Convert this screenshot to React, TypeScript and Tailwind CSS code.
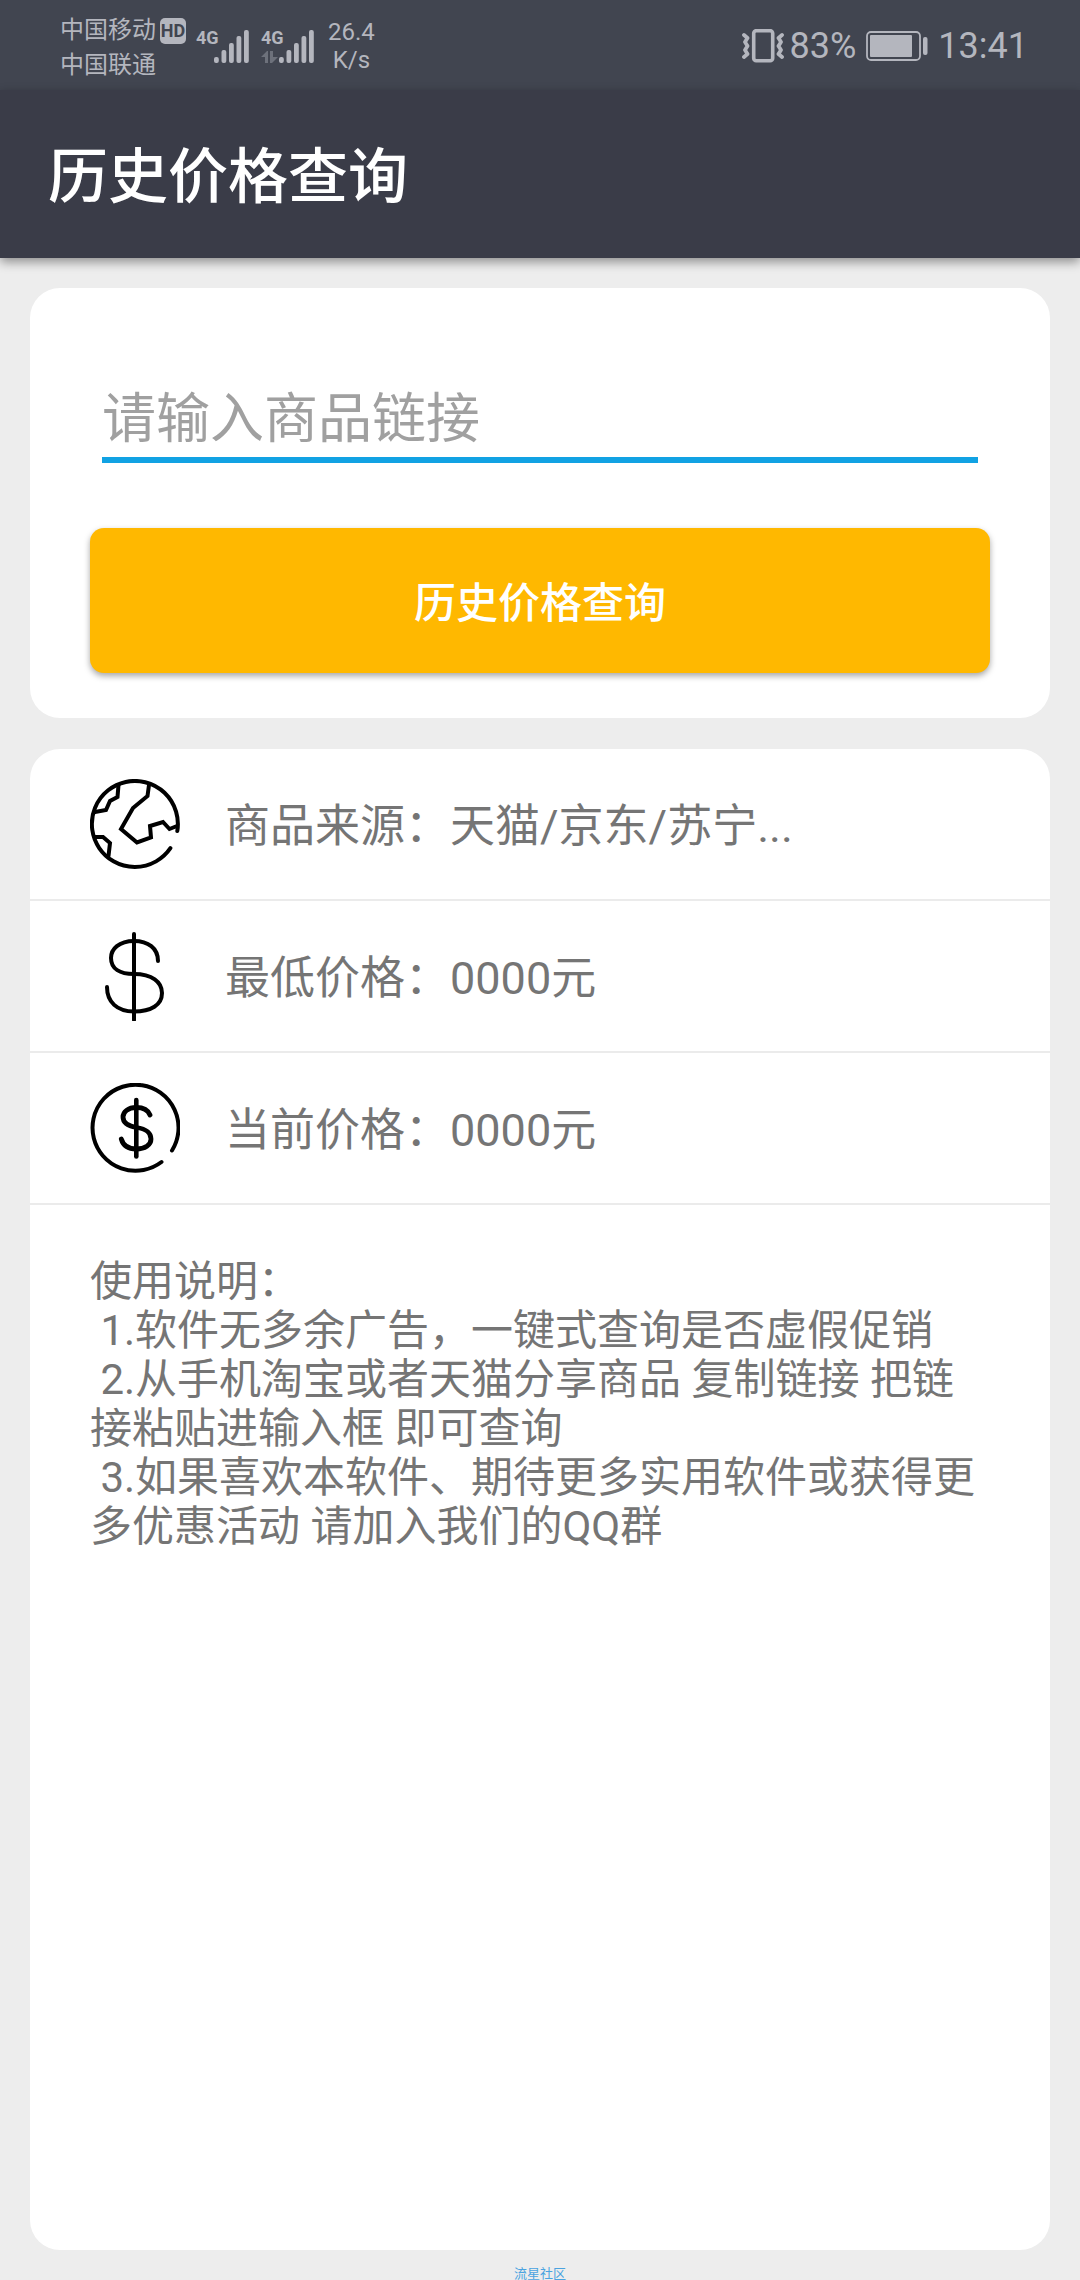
import React, { useState } from 'react';

const rows = [
    { label: '商品来源：', value: '天猫/京东/苏宁...', icon: 'globe' },
    { label: '最低价格：', value: '0000元', icon: 'dollar' },
    { label: '当前价格：', value: '0000元', icon: 'coin' },
];

const help = `使用说明：
 1.软件无多余广告，一键式查询是否虚假促销
 2.从手机淘宝或者天猫分享商品 复制链接 把链接粘贴进输入框 即可查询
 3.如果喜欢本软件、期待更多实用软件或获得更多优惠活动 请加入我们的QQ群`;

const Signal = ({ data }: { data?: boolean }) => (
    <div className="flex h-[33px] items-end">
        <div className="flex h-full w-[18px] flex-col justify-between">
            <span className="font-['Liberation_Sans_Narrow',Roboto,sans-serif] text-[18px] leading-4 font-bold">4G</span>
            <svg width="17" height="12" viewBox="0 0 17 12" className="text-[#6d717b]" fill="currentColor">
                {data && (
                    <>
                        <path d="M0 6L6 0H7V12H4V6Z" />
                        <path d="M9 0H12V6H17L11 12H9Z" />
                    </>
                )}
            </svg>
        </div>
        <svg width="35" height="33" viewBox="0 0 35 33" fill="currentColor">
            <rect x="0" y="27" width="4.8" height="6" rx="2" />
            <rect x="7.5" y="20" width="4.8" height="13" rx="2" />
            <rect x="15" y="13" width="4.8" height="20" rx="2" />
            <rect x="22.5" y="6" width="4.8" height="27" rx="2" />
            <rect x="30" y="0" width="4.8" height="33" rx="2" />
        </svg>
    </div>
);

const StatusBar = () => (
    <div className="flex h-[90px] items-center justify-between bg-[#414550] pt-0.5 pr-[52px] pl-[60px] text-[#b4b6be]">
        <div className="flex items-center">
            <div className="pt-1 text-[24px] leading-[35px]">
                <div className="flex items-center gap-1">
                    中国移动
                    <span className="flex h-[26px] w-[26px] items-center justify-center rounded-[5px] bg-[#b4b6be] font-['Liberation_Sans_Narrow',Roboto,sans-serif] text-[18px] font-bold text-[#414550]">HD</span>
                </div>
                <div>中国联通</div>
            </div>
            <div className="ml-2.5 flex gap-3">
                <Signal />
                <Signal data />
            </div>
            <div className="ml-3.5 text-center text-[24px] leading-7">
                <div>26.4</div>
                <div>K/s</div>
            </div>
        </div>
        <div className="flex items-center text-[36px] leading-none">
            <svg width="42" height="34" viewBox="0 0 42 34" fill="none" stroke="currentColor" strokeLinecap="round" strokeLinejoin="round">
                <rect x="11.7" y="1.7" width="19" height="30" rx="2.5" strokeWidth="3.6" />
                <path d="M2 6L5.5 9L3 13L5.5 17L3 21L5.5 25L2 28" strokeWidth="3.8" />
                <path d="M40 6L36.5 9L39 13L36.5 17L39 21L36.5 25L40 28" strokeWidth="3.8" />
            </svg>
            <span className="ml-1.5">83%</span>
            <svg className="ml-2.5" width="62" height="30" viewBox="0 0 62 30" fill="none">
                <rect x="1" y="1" width="53" height="28" rx="4" stroke="currentColor" strokeWidth="1.8" />
                <rect x="4" y="4" width="42" height="22" rx="1" fill="currentColor" />
                <rect x="57" y="6" width="4.5" height="18" rx="2" fill="currentColor" />
            </svg>
            <span className="ml-2.5">13:41</span>
        </div>
    </div>
);

const RowIcon = ({ name }: { name: string }) => (
    <svg width="90" height="90" viewBox="0 0 90 90" className="shrink-0" fill="none" stroke="#000" strokeWidth="4" strokeLinecap="round" strokeLinejoin="round">
        {name === 'globe' && (
            <>
                <path d="M87.3 52A43 43 0 1 0 80.4 69.2" />
                <path d="M59 6L57.5 17L43 29L31 50L47 63.5L61 58.5L60 47L73 43L79.5 50L87 47" strokeLinejoin="miter" />
                <path d="M28.5 6L27.5 18L20 22L16 31L5 33" strokeLinejoin="miter" />
                <path d="M5 58H13L20 64L18.5 77" strokeLinejoin="miter" />
            </>
        )}
        {name === 'dollar' && (
            <>
                <path d="M44 3V89" />
                <path d="M68 30C68 17 58 10 44 10C29 10 21 18 21 27C21 38 30 43 44 43C62 43 72 51 72 62C72 74 61 80.5 44 80.5C27 80.5 17 71 17 56" />
            </>
        )}
        {name === 'coin' && (
            <>
                <path d="M82 67.5A43 43 0 1 0 71.5 79" />
                <path d="M46.3 17V73.5" strokeWidth="4.6" />
                <path d="M60 32C58 27 53 24.5 46.3 24.5C38 24.5 33 29 33 34C33 40 38 43 46.3 44.5C56 46 61 49 61 56C61 62 55 66 46.3 66C38 66 33 62 31.3 56" strokeWidth="4.8" />
            </>
        )}
    </svg>
);

const App = () => {
    const [link, setLink] = useState('');

    return (
        <div className="flex min-h-screen flex-col bg-[#ededed] font-[Roboto,'Noto_Sans_CJK_SC',sans-serif]">
            <StatusBar />
            <header className="flex h-[168px] items-center bg-[#3a3c48] px-12 pt-2 shadow-[0_4px_10px_rgba(0,0,0,0.4)]">
                <h1 className="text-[60px] font-medium text-white">历史价格查询</h1>
            </header>

            <main className="flex flex-1 flex-col gap-[31px] px-[30px] pt-[30px]">
                <form onSubmit={(e) => e.preventDefault()} className="flex flex-col rounded-[30px] bg-white px-[60px] pt-[88px] pb-[45px]">
                    <input
                        type="text"
                        aria-label="商品链接"
                        value={link}
                        onChange={(e) => setLink(e.target.value)}
                        placeholder="请输入商品链接"
                        className="mx-3 h-[87px] border-b-[6px] border-[#11a2e3] pt-1.5 text-[54px] text-gray-700 outline-none placeholder:text-[#a0a0a0]"
                    />
                    <button type="submit" className="mt-[65px] h-[145px] rounded-[14px] bg-[#ffb800] pt-1.5 text-[42px] font-medium text-white shadow-[0_3px_6px_rgba(0,0,0,0.35)]">
                        历史价格查询
                    </button>
                </form>

                <section className="flex-1 rounded-[30px] bg-white">
                    <ul>
                        {rows.map((row) => (
                            <li key={row.icon} className="flex h-[152px] items-center gap-[45px] border-b-2 border-[#ebebeb] px-[60px] text-[45px] text-[#757575]">
                                <RowIcon name={row.icon} />
                                <span className="pt-1.5">{row.label}{row.value}</span>
                            </li>
                        ))}
                    </ul>
                    <p className="px-[60px] pt-[52px] text-[42px] leading-[49px] whitespace-pre-wrap text-[#757575]">{help}</p>
                </section>
            </main>

            <footer className="flex h-[30px] items-end justify-center text-[13px] leading-[12px] text-[#4aa3e0]">
                流星社区
            </footer>
        </div>
    );
};

export default App;
